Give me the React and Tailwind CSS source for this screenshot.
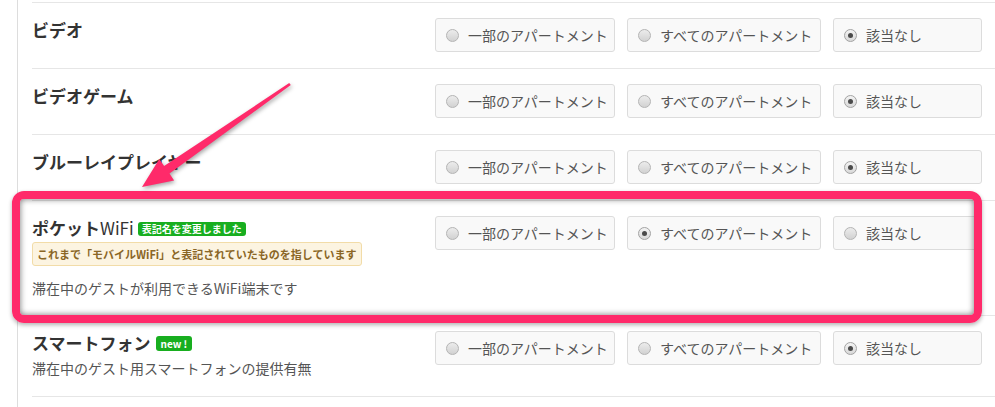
import React from "react";

const FONT = { fontFamily: '"Noto Sans CJK JP", "Noto Sans", sans-serif' };

function Radio({ checked }) {
  if (checked) {
    return (
      <span className="w-[13px] h-[13px] rounded-full border border-[#a3a3a3] bg-gradient-to-b from-[#f4f4f4] to-[#d8d8d8] flex items-center justify-center shrink-0">
        <span className="w-[5px] h-[5px] rounded-full bg-[#4a4a4a]" />
      </span>
    );
  }
  return (
    <span className="w-[13px] h-[13px] rounded-full border border-[#b4b4b4] bg-gradient-to-b from-[#ececec] to-[#d2d2d2] shrink-0" />
  );
}

function Opt({ label, checked, w }) {
  return (
    <div
      className={`h-[34px] ${w} border border-[#dcdcdc] bg-[#f9f9f9] rounded-[3px] flex items-center pl-[10px] gap-[9px] shrink-0`}
    >
      <Radio checked={checked} />
      <span className="text-[14px] leading-[20px] text-[#555] whitespace-nowrap">{label}</span>
    </div>
  );
}

function Options({ sel }) {
  return (
    <div className="flex gap-3 pt-[15px]">
      <Opt label="一部のアパートメント" checked={sel === 0} w="w-[180px]" />
      <Opt label="すべてのアパートメント" checked={sel === 1} w="w-[194px]" />
      <Opt label="該当なし" checked={sel === 2} w="w-[149px]" />
    </div>
  );
}

function Title({ children }) {
  return (
    <div className="text-[17px] leading-[24px] font-bold text-[#333] whitespace-nowrap">{children}</div>
  );
}

export default function App() {
  return (
    <div className="relative w-[995px] h-[407px] overflow-hidden bg-white" style={FONT}>
      <div className="ml-[17px] h-full border-l border-[#dddddd] pl-[14px] pt-[2px]">
        {/* Row 1 */}
        <div className="h-[66px] border-t border-[#e6e6e6] flex">
          <div className="w-[403px] shrink-0 pt-[15px]">
            <Title>ビデオ</Title>
          </div>
          <Options sel={2} />
        </div>
        {/* Row 2 */}
        <div className="h-[66px] border-t border-[#e6e6e6] flex">
          <div className="w-[403px] shrink-0 pt-[15px]">
            <Title>ビデオゲーム</Title>
          </div>
          <Options sel={2} />
        </div>
        {/* Row 3 */}
        <div className="h-[66px] border-t border-[#e6e6e6] flex">
          <div className="w-[403px] shrink-0 pt-[15px]">
            <Title>ブルーレイプレイヤー</Title>
          </div>
          <Options sel={2} />
        </div>
        {/* Row 4 */}
        <div className="h-[115px] border-t border-[#e6e6e6] flex">
          <div className="w-[403px] shrink-0 pt-[15px]">
            <div className="flex items-center gap-[4px]">
              <Title>
                ポケット<span className="font-normal">WiFi</span>
              </Title>
              <span className="h-[14px] px-[4px] rounded-[3px] bg-[#18ae1f] text-white text-[10px] leading-[14px] font-bold whitespace-nowrap mt-[1px]">
                表記名を変更しました
              </span>
            </div>
            <div className="inline-flex h-[24px] items-center px-[4px] border border-[#f2dca8] bg-[#fcf4e1] rounded-[3px] text-[11px] font-bold text-[#8a6626] whitespace-nowrap">
              これまで「モバイルWiFi」と表記されていたものを指しています
            </div>
            <div className="mt-[12px] text-[14px] leading-[20px] text-[#555] whitespace-nowrap">
              滞在中のゲストが利用できるWiFi端末です
            </div>
          </div>
          <Options sel={1} />
        </div>
        {/* Row 5 */}
        <div className="h-[81px] border-t border-[#e6e6e6] flex">
          <div className="w-[403px] shrink-0 pt-[15px]">
            <div className="flex items-center gap-[5px]">
              <Title>スマートフォン</Title>
              <span className="h-[15px] px-[5px] rounded-[3px] bg-[#18ae1f] text-white text-[10px] leading-[15px] font-bold whitespace-nowrap mt-[1px]">
                new !
              </span>
            </div>
            <div className="mt-[3px] text-[14px] leading-[20px] text-[#555] whitespace-nowrap">
              滞在中のゲスト用スマートフォンの提供有無
            </div>
          </div>
          <Options sel={2} />
        </div>
        <div className="border-t border-[#e6e6e6]" />
      </div>

      {/* Highlight box */}
      <div className="absolute left-[12px] top-[191px] w-[970px] h-[132px] border-[8px] border-[#ff2a6a] rounded-[12px] shadow-[inset_0_0_6px_rgba(0,0,0,0.55),0_2px_4px_rgba(0,0,0,0.3)] pointer-events-none" />

      {/* Arrow */}
      <svg
        className="absolute left-0 top-0 pointer-events-none"
        width="995"
        height="407"
        viewBox="0 0 995 407"
        style={{ filter: "drop-shadow(1px 2px 2px rgba(0,0,0,0.35))" }}
      >
        <polygon
          points="290.8,84.9 169.5,173.6 174.1,180.5 142,187 159.3,159.1 164.1,166.1 289.2,83.1"
          fill="#ff2a6a"
        />
      </svg>
    </div>
  );
}
